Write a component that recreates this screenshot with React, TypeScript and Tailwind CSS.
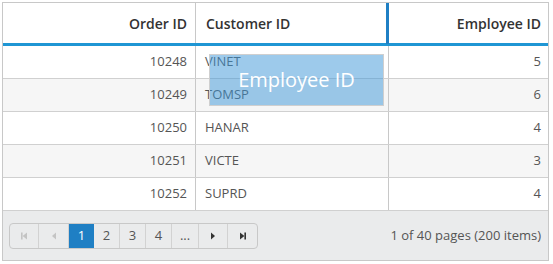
import React from 'react'

const rows = [
  { order: 10248, customer: 'VINET', employee: 5 },
  { order: 10249, customer: 'TOMSP', employee: 6 },
  { order: 10250, customer: 'HANAR', employee: 4 },
  { order: 10251, customer: 'VICTE', employee: 3 },
  { order: 10252, customer: 'SUPRD', employee: 4 },
]

const font = { fontFamily: '"Open Sans", "Noto Sans", sans-serif' }

function First({ color }: { color: string }) {
  return (
    <svg width="8" height="8" viewBox="0 0 8 8">
      <rect x="1" y="0.5" width="1.6" height="7" fill={color} />
      <path d="M7 0.5 L2.6 4 L7 7.5 Z" fill={color} />
    </svg>
  )
}

function Prev({ color }: { color: string }) {
  return (
    <svg width="6" height="8" viewBox="0 0 6 8">
      <path d="M5 0.5 L1 4 L5 7.5 Z" fill={color} />
    </svg>
  )
}

function Next({ color }: { color: string }) {
  return (
    <svg width="6" height="8" viewBox="0 0 6 8">
      <path d="M1 0.5 L5 4 L1 7.5 Z" fill={color} />
    </svg>
  )
}

function Last({ color }: { color: string }) {
  return (
    <svg width="8" height="8" viewBox="0 0 8 8">
      <path d="M1 0.5 L5.4 4 L1 7.5 Z" fill={color} />
      <rect x="5.4" y="0.5" width="1.6" height="7" fill={color} />
    </svg>
  )
}

export default function App() {
  return (
    <div className="w-[553px] h-[264px] bg-white pt-[2px] pl-[2px]" style={font}>
      <div className="relative w-[547px] border border-[#c8c8c8]">
        {/* header */}
        <div className="grid grid-cols-[193px_193px_1fr] h-[43px] border-b-[3px] border-[#1f96d4] text-[14px] font-semibold text-[#333]">
          <div className="flex items-center justify-end pr-[8px] border-r border-[#c8c8c8]">Order ID</div>
          <div className="flex items-center pl-[10px] border-r border-[#c8c8c8]">Customer ID</div>
          <div className="flex items-center justify-end pr-[7px]">Employee ID</div>
        </div>

        {/* rows */}
        {rows.map((r, i) => (
          <div
            key={r.order}
            className={`grid grid-cols-[193px_193px_1fr] h-[33px] border-b border-[#d0d0d0] text-[13px] text-[#555] ${
              i % 2 === 1 ? 'bg-[#f6f6f6]' : 'bg-white'
            }`}
          >
            <div className="flex items-center justify-end pr-[8px] border-r border-[#c8c8c8]">{r.order}</div>
            <div className="flex items-center pl-[9px] border-r border-[#c8c8c8]">{r.customer}</div>
            <div className="flex items-center justify-end pr-[7px]">{r.employee}</div>
          </div>
        ))}

        {/* pager */}
        <div className="flex items-center justify-between h-[49px] bg-[#eaebec] pl-[6px] pr-[7px]">
          <div className="flex h-[26px] border border-[#c8c8c8] rounded-[4px] text-[13px] text-[#555] overflow-hidden">
            <div className="w-[29px] flex items-center justify-center border-r border-[#d2d2d2]">
              <First color="#c4c4c4" />
            </div>
            <div className="w-[30px] flex items-center justify-center border-r border-[#d2d2d2]">
              <Prev color="#c4c4c4" />
            </div>
            <div className="w-[25px] flex items-center justify-center bg-[#1f7fc4] text-white">1</div>
            <div className="w-[26px] flex items-center justify-center border-r border-[#d2d2d2]">2</div>
            <div className="w-[26px] flex items-center justify-center border-r border-[#d2d2d2]">3</div>
            <div className="w-[26px] flex items-center justify-center border-r border-[#d2d2d2]">4</div>
            <div className="w-[27px] flex items-center justify-center border-r border-[#d2d2d2]">...</div>
            <div className="w-[29px] flex items-center justify-center border-r border-[#d2d2d2]">
              <Next color="#333" />
            </div>
            <div className="w-[29px] flex items-center justify-center">
              <Last color="#333" />
            </div>
          </div>
          <div className="text-[13px] text-[#555]">1 of 40 pages (200 items)</div>
        </div>

        {/* drop indicator */}
        <div className="absolute left-[383px] top-0 w-[3px] h-[41px] bg-[#1f7fc4]" />

        {/* drag clue */}
        <div className="absolute left-[206px] top-[51px] w-[175px] h-[52px] border border-[#cfcfcf] bg-[#3c96d7]/50 flex items-center justify-center text-white text-[20px]">
          Employee ID
        </div>
      </div>
    </div>
  )
}
